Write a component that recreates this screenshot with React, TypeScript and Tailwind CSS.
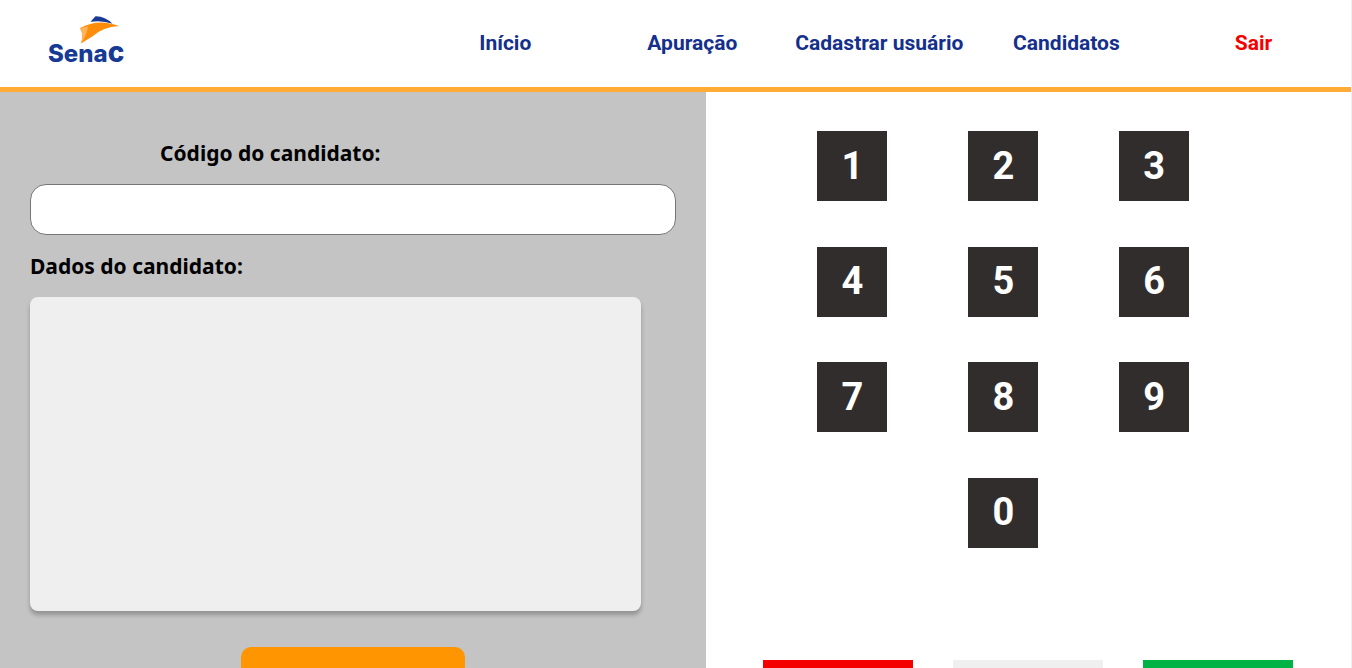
import { useState } from "react";

const links = ["Início", "Apuração", "Cadastrar usuário", "Candidatos"];
const digits = ["1", "2", "3", "4", "5", "6", "7", "8", "9", "0"];

function Logo() {
  return (
    <svg width="84" height="56" viewBox="0 0 84 56" className="block" role="img" aria-label="Senac">
      <path d="M42.500 5.800 L47.500 0.200 Q57 0 64.500 7.800 Q54 3.800 42.500 5.800 Z" fill="#173a94" />
      <path d="M32 12 Q50 2 71 10 Q55 11 45 20 L33 27.500 Q36 19 32 12 Z" fill="#ff8d0a" />
      <path d="M32 12 L40 10.500 Q39 19 33 27.500 Q36 19 32 12 Z" fill="#ffb35c" />
      <text
        x="0"
        y="46"
        fontFamily="Inter, sans-serif"
        fontWeight="800"
        fontSize="24"
        fill="#173a94"
      >
        Sena<tspan fontSize="28">c</tspan>
      </text>
    </svg>
  );
}

export default function App() {
  const [code, setCode] = useState("");

  return (
    <div className="flex min-h-screen flex-col border-r border-[#f0f0f0] bg-white font-['Roboto',sans-serif]">
      <header className="flex h-[92px] items-center justify-between border-b-[5px] border-[#ffab36] pr-1 pl-12">
        <a href="#inicio">
          <Logo />
        </a>
        <nav className="grid w-[72%] grid-cols-5 pb-0.5 text-center text-[21px] leading-7 font-bold text-[#142f8c]">
          {links.map((link) => (
            <a key={link} href="#" className="whitespace-nowrap">
              {link}
            </a>
          ))}
          <a href="#sair" className="text-[#f50000]">
            Sair
          </a>
        </nav>
      </header>

      <main className="grid flex-1 grid-cols-[706fr_645fr]">
        <section className="flex flex-col bg-[#c4c4c4] px-[30px] pt-[46px] pb-8 font-['Noto_Sans',sans-serif] text-[21px] leading-[30px] font-bold text-black">
          <label htmlFor="codigo" className="pl-[130px]">
            Código do candidato:
          </label>
          <input
            id="codigo"
            type="text"
            value={code}
            onChange={(e) => setCode(e.target.value)}
            className="mt-4 h-[51px] w-full rounded-2xl border border-[#767676] bg-white px-4 outline-none"
          />
          <h2 className="mt-4">Dados do candidato:</h2>
          <div className="mt-4 mr-[35px] h-[314px] rounded-lg bg-[#efefef] shadow-[0_4px_4px_rgba(0,0,0,0.25)]" />
          <button
            type="button"
            aria-label="Votar"
            className="mt-9 h-[60px] w-56 self-center rounded-[10px] bg-[#ff9500]"
          />
        </section>

        <section className="flex flex-col pt-[39px] pr-0.5 pb-8">
          <div className="ml-[71px] grid h-[417px] w-[70.4%] grid-cols-3 content-between justify-items-center">
            {digits.map((digit) => (
              <button
                key={digit}
                type="button"
                onClick={() => setCode(code + digit)}
                className="size-[70px] bg-[#322d2d] text-[38px] font-bold text-white last:col-start-2"
              >
                {digit}
              </button>
            ))}
          </div>
          <div className="mt-28 flex justify-center gap-10">
            <button
              type="button"
              aria-label="Corrige"
              onClick={() => setCode("")}
              className="h-[50px] w-[150px] bg-[#f50000]"
            />
            <button type="button" aria-label="Branco" className="h-[50px] w-[150px] bg-[#efefef]" />
            <button type="button" aria-label="Confirma" className="h-[50px] w-[150px] bg-[#00b344]" />
          </div>
        </section>
      </main>
    </div>
  );
}
